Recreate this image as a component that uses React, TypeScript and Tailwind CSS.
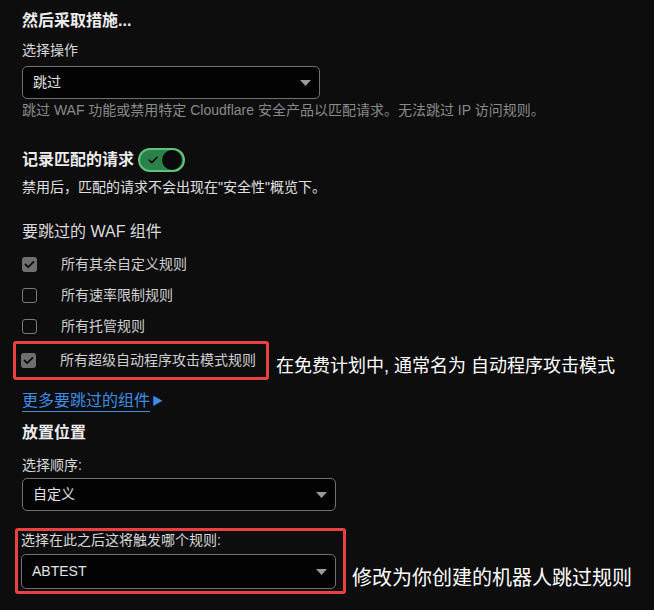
import React from 'react';

const FONT = "font-['Liberation_Sans','Noto_Sans_CJK_SC',sans-serif]";

function Caret() {
  return (
    <svg width="11" height="6" viewBox="0 0 11 6" className="shrink-0">
      <path d="M0 0 L11 0 L5.5 6 Z" fill="#9a9a9a" />
    </svg>
  );
}

function Select({ value, className }: { value: string; className: string }) {
  return (
    <div
      className={`flex items-center justify-between rounded-[5px] border border-[#707070] bg-[#030303] pl-[10px] pr-[8px] text-[14px] text-[#e2e2e2] ${className}`}
    >
      <span>{value}</span>
      <Caret />
    </div>
  );
}

function Checkbox({ checked }: { checked: boolean }) {
  if (checked) {
    return (
      <div className="flex h-[15px] w-[15px] items-center justify-center rounded-[3px] bg-[#6f6f6f]">
        <svg width="11" height="9" viewBox="0 0 11 9">
          <path d="M1.5 4.5 L4.2 7.2 L9.5 1.8" stroke="#0d0d0d" strokeWidth="1.8" fill="none" strokeLinecap="round" strokeLinejoin="round" />
        </svg>
      </div>
    );
  }
  return <div className="h-[15px] w-[15px] rounded-[3px] border-[1.5px] border-[#7a7a7a]" />;
}

function Toggle() {
  return (
    <div className="flex h-[24px] w-[47px] items-center justify-between rounded-full border-2 border-[#5fc27d] bg-[#2c8049] pl-[8px] pr-[1px]">
      <svg width="10" height="8" viewBox="0 0 10 8">
        <path d="M1 4 L3.8 6.6 L9 1.2" stroke="#0d0d0d" strokeWidth="1.6" fill="none" strokeLinecap="round" strokeLinejoin="round" />
      </svg>
      <div className="h-[20px] w-[20px] rounded-full bg-[#0a0a0a]" />
    </div>
  );
}

const rules = [
  { label: '所有其余自定义规则', checked: true },
  { label: '所有速率限制规则', checked: false },
  { label: '所有托管规则', checked: false },
];

export default function App() {
  return (
    <div className={`${FONT} h-[610px] w-[654px] overflow-hidden bg-[#0d0d0d] pl-[22px] pt-[9px]`}>
      <div className="flex flex-col">
        <h2 className="h-6 text-[16px] font-bold leading-6 text-[#ececec]">然后采取措施...</h2>
        <div className="mt-[7px] h-5 text-[14px] leading-5 text-[#d8d8d8]">选择操作</div>
        <Select value="跳过" className="mt-[6px] h-[33px] w-[298px]" />
        <p className="mt-[1px] h-5 text-[14px] leading-5 text-[#8a8a8a]">
          跳过 WAF 功能或禁用特定 Cloudflare 安全产品以匹配请求。无法跳过 IP 访问规则。
        </p>

        <div className="mt-[28px] flex h-6 items-center gap-[4px]">
          <span className="text-[16px] font-bold text-[#ececec]">记录匹配的请求</span>
          <Toggle />
        </div>
        <p className="mt-[5px] h-5 text-[14px] leading-5 text-[#e0e0e0]">
          禁用后，匹配的请求不会出现在"安全性"概览下。
        </p>

        <div className="mt-[24px] h-[22px] text-[16px] leading-[22px] text-[#dcdcdc]">要跳过的 WAF 组件</div>

        <div className="mt-[6px] flex flex-col">
          {rules.map((r) => (
            <div key={r.label} className="flex h-[31px] items-center">
              <Checkbox checked={r.checked} />
              <span className="ml-[24px] text-[14px] text-[#cfcfcf]">{r.label}</span>
            </div>
          ))}
          <div className="mt-[-2px] flex items-center">
            <div className="ml-[-9px] flex h-[39px] w-[256px] items-center rounded-[3px] border-[3px] border-[#e8413f] pl-[5px]">
              <Checkbox checked />
              <span className="ml-[24px] text-[14px] text-[#cfcfcf]">所有超级自动程序攻击模式规则</span>
            </div>
            <span className="ml-[7px] mt-[13px] text-[18px] text-white">在免费计划中, 通常名为 自动程序攻击模式</span>
          </div>
        </div>

        <div className="mt-[11px] flex h-5 items-center text-[16px] leading-5 text-[#3d8de6]">
          <span className="border-b border-[#3d8de6] leading-[20px]">更多要跳过的组件</span>
          <span className="ml-[2px] text-[11px]">▶</span>
        </div>

        <h3 className="mt-[10px] h-6 text-[16px] font-bold leading-6 text-[#ececec]">放置位置</h3>
        <div className="mt-[10px] h-5 text-[14px] leading-5 text-[#d8d8d8]">选择顺序:</div>
        <Select value="自定义" className="mt-[3px] h-[33px] w-[314px]" />

        <div className="mt-[17px] flex items-end">
          <div className="ml-[-7px] flex w-[331px] flex-col rounded-[3px] border-[3px] border-[#e8413f] pb-[2px] pl-[3px] pr-[7px]">
            <div className="h-[18px] text-[14px] leading-[18px] text-[#d8d8d8]">选择在此之后这将触发哪个规则:</div>
            <Select value="ABTEST" className="mt-[5px] h-[35px] w-full" />
          </div>
          <span className="mb-[2px] ml-[6px] text-[20px] leading-[28px] text-white">修改为你创建的机器人跳过规则</span>
        </div>
      </div>
    </div>
  );
}
